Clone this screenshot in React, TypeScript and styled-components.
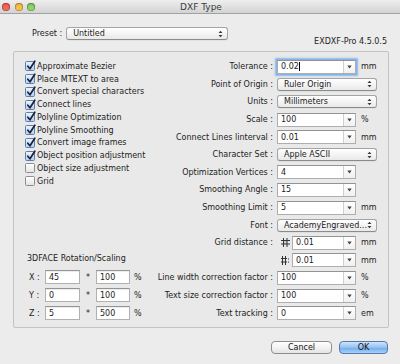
import React from 'react';
import styled, { createGlobalStyle, css } from 'styled-components';

const GlobalStyle = createGlobalStyle`
  html, body { margin: 0; padding: 0; background: #ededed; }
  body {
    font-family: "DejaVu Sans", "Noto Sans", sans-serif;
    font-size: 8px;
    color: #1c1c1c;
  }
  * { box-sizing: border-box; }
`;

const Window = styled.div`
  width: 400px;
  height: 364px;
  background: #ececec;
  display: flex;
  flex-direction: column;
  overflow: hidden;
`;

const TitleBar = styled.div`
  height: 14px;
  flex: none;
  background: linear-gradient(#eeeeee, #d3d3d3);
  border-bottom: 1px solid #a2a2a2;
  display: grid;
  grid-template-columns: 1fr auto 1fr;
  align-items: center;
  padding-left: 2px;
`;

const Lights = styled.div`
  display: flex;
  gap: 4.5px;
`;

const Light = styled.span<{ $c: string; $d: string }>`
  width: 8px;
  height: 8px;
  border-radius: 50%;
  background: radial-gradient(circle at 50% 65%, ${(p) => p.$c} 35%, ${(p) => p.$d} 100%);
  box-shadow: inset 0 0 0 0.5px rgba(0, 0, 0, 0.35);
`;

const Title = styled.div`
  font-size: 9px;
  color: #3b3b3b;
`;

const Body = styled.div`
  flex: 1;
  display: flex;
  flex-direction: column;
  padding: 0 11px 0 13px;
`;

const Header = styled.div`
  display: flex;
  flex-direction: column;
`;

const PresetRow = styled.div`
  display: flex;
  align-items: center;
  gap: 4px;
  margin-top: 13px;
  padding-left: 19px;
  height: 13px;
`;

const Label = styled.span`
  white-space: nowrap;
`;

const Version = styled.div`
  align-self: flex-end;
  margin-top: -3px;
  margin-right: 2px;
  line-height: 10px;
  height: 10px;
`;

const Popup = styled.div<{ $w: number }>`
  width: ${(p) => p.$w}px;
  height: 13px;
  border: 1px solid #a4a4a4;
  border-bottom-color: #8b8b8b;
  border-radius: 3px;
  background: linear-gradient(#ffffff, #f4f4f4 50%, #e9e9e9);
  box-shadow: 0 0.5px 0 rgba(0, 0, 0, 0.08);
  display: flex;
  align-items: center;
  justify-content: space-between;
  padding: 0 4px 0 6px;
  white-space: nowrap;
  overflow: hidden;
`;

const Arrows = () => (
  <svg width="5" height="8" viewBox="0 0 5 8">
    <path d="M0.5 3 L2.5 0.8 L4.5 3 Z M0.5 5 L2.5 7.2 L4.5 5 Z" fill="#3a3a3a" />
  </svg>
);

const Group = styled.div`
  margin-top: 4px;
  width: 376px;
  height: 277px;
  border: 1px solid #c3c3c3;
  border-radius: 2px;
  background: #e9e9e9;
  display: grid;
  grid-template-columns: 130px 1fr;
  padding: 6px 11px 5px 11px;
`;

const LeftCol = styled.div`
  display: flex;
  flex-direction: column;
`;

const CheckList = styled.div`
  margin-top: 2px;
  display: flex;
  flex-direction: column;
`;

const CheckRow = styled.label`
  height: 12.75px;
  display: flex;
  align-items: center;
  gap: 2px;
  white-space: nowrap;
`;

const Box = styled.span<{ $on: boolean }>`
  position: relative;
  width: 10px;
  height: 10px;
  flex: none;
  border-radius: 1.5px;
  border: 1px solid #8d8d8d;
  background: linear-gradient(#ffffff, #e4e4e4);
  ${(p) =>
    p.$on &&
    css`
      border-color: #5f7fa8;
      background: linear-gradient(#eaf3fd, #b2d1f1);
    `}
  svg {
    position: absolute;
    left: 0px;
    top: -2px;
  }
`;

const Check = ({ on }: { on: boolean }) => (
  <Box $on={on}>
    {on && (
      <svg width="10" height="11" viewBox="0 0 10 11">
        <path d="M1.8 6.2 L4 8.8 L8.8 1.2" fill="none" stroke="#15233f" strokeWidth="1.7" strokeLinecap="round" strokeLinejoin="round" />
      </svg>
    )}
  </Box>
);

const Section = styled.div`
  margin-top: auto;
  display: flex;
  flex-direction: column;
`;

const SectionTitle = styled.div`
  padding-left: 2px;
  line-height: 14px;
  height: 14px;
  margin-bottom: 2px;
`;

const XyzRow = styled.div`
  height: 18px;
  display: grid;
  grid-template-columns: 12px 35px 8px 34px auto;
  column-gap: 4px;
  align-items: center;
  padding-left: 4px;
`;

const Star = styled.span`
  text-align: center;
`;

const TextField = styled.div<{ $w?: number }>`
  width: ${(p) => (p.$w ? `${p.$w}px` : '100%')};
  height: 14px;
  background: #ffffff;
  border: 1px solid #b1b1b1;
  border-top-color: #939393;
  box-shadow: inset 0 1px 1px rgba(0, 0, 0, 0.08);
  display: flex;
  align-items: center;
  padding-left: 3px;
`;

const RightGrid = styled.div`
  display: grid;
  grid-template-columns: minmax(0, 1fr) 100px;
  grid-auto-rows: 17.6px;
  column-gap: 4px;
  align-items: center;
`;

const RowLabel = styled.span`
  justify-self: end;
  white-space: nowrap;
`;

const Cell = styled.div<{ $indent?: number }>`
  display: flex;
  align-items: center;
  gap: 5px;
  padding-left: ${(p) => p.$indent ?? 0}px;
`;

const ComboBox = styled.div<{ $w: number; $focus?: boolean }>`
  width: ${(p) => p.$w}px;
  height: 14px;
  flex: none;
  background: #ffffff;
  border: 1px solid #aeaeae;
  border-top-color: #939393;
  display: flex;
  align-items: stretch;
  ${(p) =>
    p.$focus &&
    css`
      box-shadow: 0 0 0 1.5px #86b4ea, 0 0 2px 2px rgba(120, 170, 235, 0.55);
    `}
`;

const ComboValue = styled.span`
  flex: 1;
  display: flex;
  align-items: center;
  padding-left: 3px;
  white-space: nowrap;
`;

const Caret = styled.span`
  width: 1px;
  height: 9px;
  background: #000;
  margin-left: 0.5px;
`;

const ComboButton = styled.span`
  width: 12px;
  flex: none;
  border-left: 1px solid #cfcfcf;
  background: linear-gradient(#ffffff, #f0f0f0);
  display: flex;
  align-items: center;
  justify-content: center;
`;

const Unit = styled.span`
  white-space: nowrap;
`;

const Combo = ({ value, w = 79, focus }: { value: string; w?: number; focus?: boolean }) => (
  <ComboBox $w={w} $focus={focus}>
    <ComboValue>
      {value}
      {focus && <Caret />}
    </ComboValue>
    <ComboButton>
      <svg width="5" height="4" viewBox="0 0 5 4">
        <path d="M0.3 0.5 L4.7 0.5 L2.5 3.5 Z" fill="#444" />
      </svg>
    </ComboButton>
  </ComboBox>
);

const GridIconA = () => (
  <svg width="9" height="9" viewBox="0 0 9 9">
    <path d="M2.5 0 V9 M6 0 V9 M0 2.5 H9 M0 6 H9" stroke="#333" strokeWidth="1" fill="none" />
    <path d="M2.5 2.5 H6 V6 H2.5 Z" fill="#333" opacity="0.15" />
  </svg>
);

const GridIconB = () => (
  <svg width="9" height="9" viewBox="0 0 9 9">
    <path d="M1.5 0 V9 M4.5 0 V9 M0 2.5 H6 M0 6 H6" stroke="#333" strokeWidth="1" fill="none" />
    <path d="M7.5 2.5 V3.5 M7.5 5.5 V6.5" stroke="#333" strokeWidth="1" />
  </svg>
);

const IconWrap = styled.span`
  display: flex;
  flex: none;
  margin-right: -3px;
`;

const ButtonRow = styled.div`
  margin-top: 13px;
  display: flex;
  justify-content: flex-end;
  gap: 7px;
  padding-right: 1px;
`;

const Button = styled.div<{ $primary?: boolean; $w: number }>`
  width: ${(p) => p.$w}px;
  height: 13px;
  border-radius: 4px;
  border: 1px solid #8e8e8e;
  background: linear-gradient(#ffffff, #f3f3f3 50%, #e4e4e4);
  display: flex;
  align-items: center;
  justify-content: center;
  color: #111;
  ${(p) =>
    p.$primary &&
    css`
      border-color: #5579a8;
      background: linear-gradient(#cfe4fb, #93c1f0 50%, #6fabec 51%, #a7d0f7);
    `}
`;

const checks: [string, boolean][] = [
  ['Approximate Bezier', true],
  ['Place MTEXT to area', true],
  ['Convert special characters', true],
  ['Connect lines', true],
  ['Polyline Optimization', true],
  ['Polyline Smoothing', true],
  ['Convert image frames', true],
  ['Object position adjustment', true],
  ['Object size adjustment', false],
  ['Grid', false],
];

const xyz: [string, string, string][] = [
  ['X', '45', '100'],
  ['Y', '0', '100'],
  ['Z', '5', '500'],
];

export default function App() {
  return (
    <>
      <GlobalStyle />
      <Window>
        <TitleBar>
          <Lights>
            <Light $c="#f2655c" $d="#c0312b" />
            <Light $c="#f4bf4f" $d="#c78a1c" />
            <Light $c="#8fd26a" $d="#4f9a2f" />
          </Lights>
          <Title>DXF Type</Title>
          <span />
        </TitleBar>
        <Body>
          <Header>
            <PresetRow>
              <Label>Preset :</Label>
              <Popup $w={162}>
                <span>Untitled</span>
                <Arrows />
              </Popup>
            </PresetRow>
            <Version>EXDXF-Pro 4.5.0.5</Version>
          </Header>
          <Group>
            <LeftCol>
              <CheckList>
                {checks.map(([t, on]) => (
                  <CheckRow key={t}>
                    <Check on={on} />
                    <span>{t}</span>
                  </CheckRow>
                ))}
              </CheckList>
              <Section>
                <SectionTitle>3DFACE Rotation/Scaling</SectionTitle>
                {xyz.map(([l, a, b]) => (
                  <XyzRow key={l}>
                    <span>{l} :</span>
                    <TextField>{a}</TextField>
                    <Star>*</Star>
                    <TextField>{b}</TextField>
                    <span>%</span>
                  </XyzRow>
                ))}
              </Section>
            </LeftCol>
            <RightGrid>
              <RowLabel>Tolerance :</RowLabel>
              <Cell>
                <Combo value="0.02" focus />
                <Unit>mm</Unit>
              </Cell>
              <RowLabel>Point of Origin :</RowLabel>
              <Cell>
                <Popup $w={100}>
                  <span>Ruler Origin</span>
                  <Arrows />
                </Popup>
              </Cell>
              <RowLabel>Units :</RowLabel>
              <Cell>
                <Popup $w={100}>
                  <span>Millimeters</span>
                  <Arrows />
                </Popup>
              </Cell>
              <RowLabel>Scale :</RowLabel>
              <Cell>
                <Combo value="100" />
                <Unit>%</Unit>
              </Cell>
              <RowLabel>Connect Lines linterval :</RowLabel>
              <Cell>
                <Combo value="0.01" />
                <Unit>mm</Unit>
              </Cell>
              <RowLabel>Character Set :</RowLabel>
              <Cell>
                <Popup $w={100}>
                  <span>Apple ASCII</span>
                  <Arrows />
                </Popup>
              </Cell>
              <RowLabel>Optimization Vertices :</RowLabel>
              <Cell>
                <Combo value="4" />
              </Cell>
              <RowLabel>Smoothing Angle :</RowLabel>
              <Cell>
                <Combo value="15" />
              </Cell>
              <RowLabel>Smoothing Limit :</RowLabel>
              <Cell>
                <Combo value="5" />
                <Unit>mm</Unit>
              </Cell>
              <RowLabel>Font :</RowLabel>
              <Cell>
                <Popup $w={100}>
                  <span>AcademyEngraved...</span>
                  <Arrows />
                </Popup>
              </Cell>
              <RowLabel>Grid distance :</RowLabel>
              <Cell $indent={4}>
                <IconWrap>
                  <GridIconA />
                </IconWrap>
                <Combo value="0.01" w={64} />
                <Unit>mm</Unit>
              </Cell>
              <span />
              <Cell $indent={4}>
                <IconWrap>
                  <GridIconB />
                </IconWrap>
                <Combo value="0.01" w={64} />
                <Unit>mm</Unit>
              </Cell>
              <RowLabel>Line width correction factor :</RowLabel>
              <Cell>
                <Combo value="100" />
                <Unit>%</Unit>
              </Cell>
              <RowLabel>Text size correction factor :</RowLabel>
              <Cell>
                <Combo value="100" />
                <Unit>%</Unit>
              </Cell>
              <RowLabel>Text tracking :</RowLabel>
              <Cell>
                <Combo value="0" />
                <Unit>em</Unit>
              </Cell>
            </RightGrid>
          </Group>
          <ButtonRow>
            <Button $w={61}>Cancel</Button>
            <Button $w={49} $primary>
              OK
            </Button>
          </ButtonRow>
        </Body>
      </Window>
    </>
  );
}
